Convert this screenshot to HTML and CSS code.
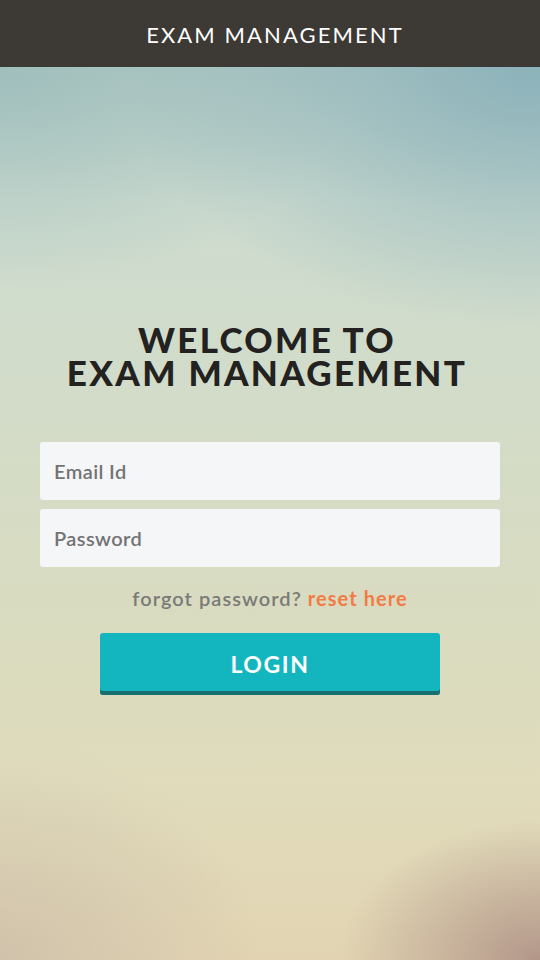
FILE: index.html
```html
<!DOCTYPE html>
<html>
<head>
<meta charset="utf-8">
<link rel="stylesheet" href="styles.css">
</head>
<body>
<div class="app">
  <header class="topbar">EXAM MANAGEMENT</header>
  <main class="content">
    <h1 class="welcome"><span class="line">WELCOME TO</span><span class="line">EXAM MANAGEMENT</span></h1>
    <form class="form">
      <input class="field" type="text" placeholder="Email Id">
      <input class="field" type="password" placeholder="Password">
      <p class="forgot">forgot password? <a class="reset">reset here</a></p>
      <button class="login" type="button">LOGIN</button>
    </form>
  </main>
</div>
</body>
</html>
```

FILE: styles.css
```css
* { box-sizing: border-box; }
html, body { margin: 0; padding: 0; }
body {
  width: 540px;
  height: 960px;
  font-family: "Lato", "Noto Sans", sans-serif;
  overflow: hidden;
}
.app {
  width: 540px;
  height: 960px;
  display: flex;
  flex-direction: column;
  background:
    radial-gradient(ellipse 200px 140px at 540px 960px, rgba(170,140,130,0.85), rgba(170,140,130,0) 100%),
    radial-gradient(ellipse 260px 220px at 0px 960px, rgba(195,180,165,0.55), rgba(195,180,165,0) 100%),
    radial-gradient(ellipse 420px 260px at 540px 67px, rgba(135,175,185,0.9), rgba(135,175,185,0) 100%),
    radial-gradient(ellipse 360px 220px at 0px 67px, rgba(150,185,185,0.7), rgba(150,185,185,0) 100%),
    linear-gradient(180deg, #a9c3c0 0px, #cddbcf 200px, #d3dcc8 420px, #d8dbc0 600px, #e0dcbc 780px, #e2d4b2 960px);
}
.topbar {
  height: 67px;
  flex: none;
  background: #3d3935;
  color: #ffffff;
  display: flex;
  align-items: center;
  justify-content: center;
  font-size: 22px;
  font-weight: 400;
  letter-spacing: 2.1px;
  padding: 1px 0 0 10px;
}
.content {
  display: flex;
  flex-direction: column;
  align-items: center;
  padding: 256px 40px 0;
}
.welcome {
  margin: 0;
  font-size: 35px;
  font-weight: 900;
  letter-spacing: 2.3px;
  color: #232220;
  text-align: center;
  display: flex;
  flex-direction: column;
  align-items: center;
  padding-right: 6px;
}
.line {
  display: block;
  line-height: 33px;
  height: 33px;
}
.form {
  margin-top: 53px;
  width: 460px;
  display: flex;
  flex-direction: column;
  align-items: center;
}
.field {
  width: 460px;
  height: 58px;
  border: none;
  border-radius: 3px;
  background: #f5f6f8;
  padding: 0 14px;
  font-family: inherit;
  font-size: 20px;
  font-weight: 600;
  color: #555;
  margin-bottom: 9px;
  outline: none;
  letter-spacing: 0.4px;
}
.field::placeholder { color: #737373; }
.forgot {
  margin: 10px 0 0;
  font-size: 20px;
  line-height: 24px;
  font-weight: 600;
  color: #7a7a77;
  letter-spacing: 1.05px;
}
.reset {
  color: #f27b45;
  font-weight: 700;
}
.login {
  margin-top: 23px;
  width: 340px;
  height: 62px;
  border: none;
  border-radius: 3px;
  background: #13b5bf;
  box-shadow: inset 0 -4px 0 #176f72;
  color: #ffffff;
  font-family: inherit;
  font-size: 23px;
  font-weight: 700;
  letter-spacing: 1.6px;
  padding-bottom: 2px;
}
```
